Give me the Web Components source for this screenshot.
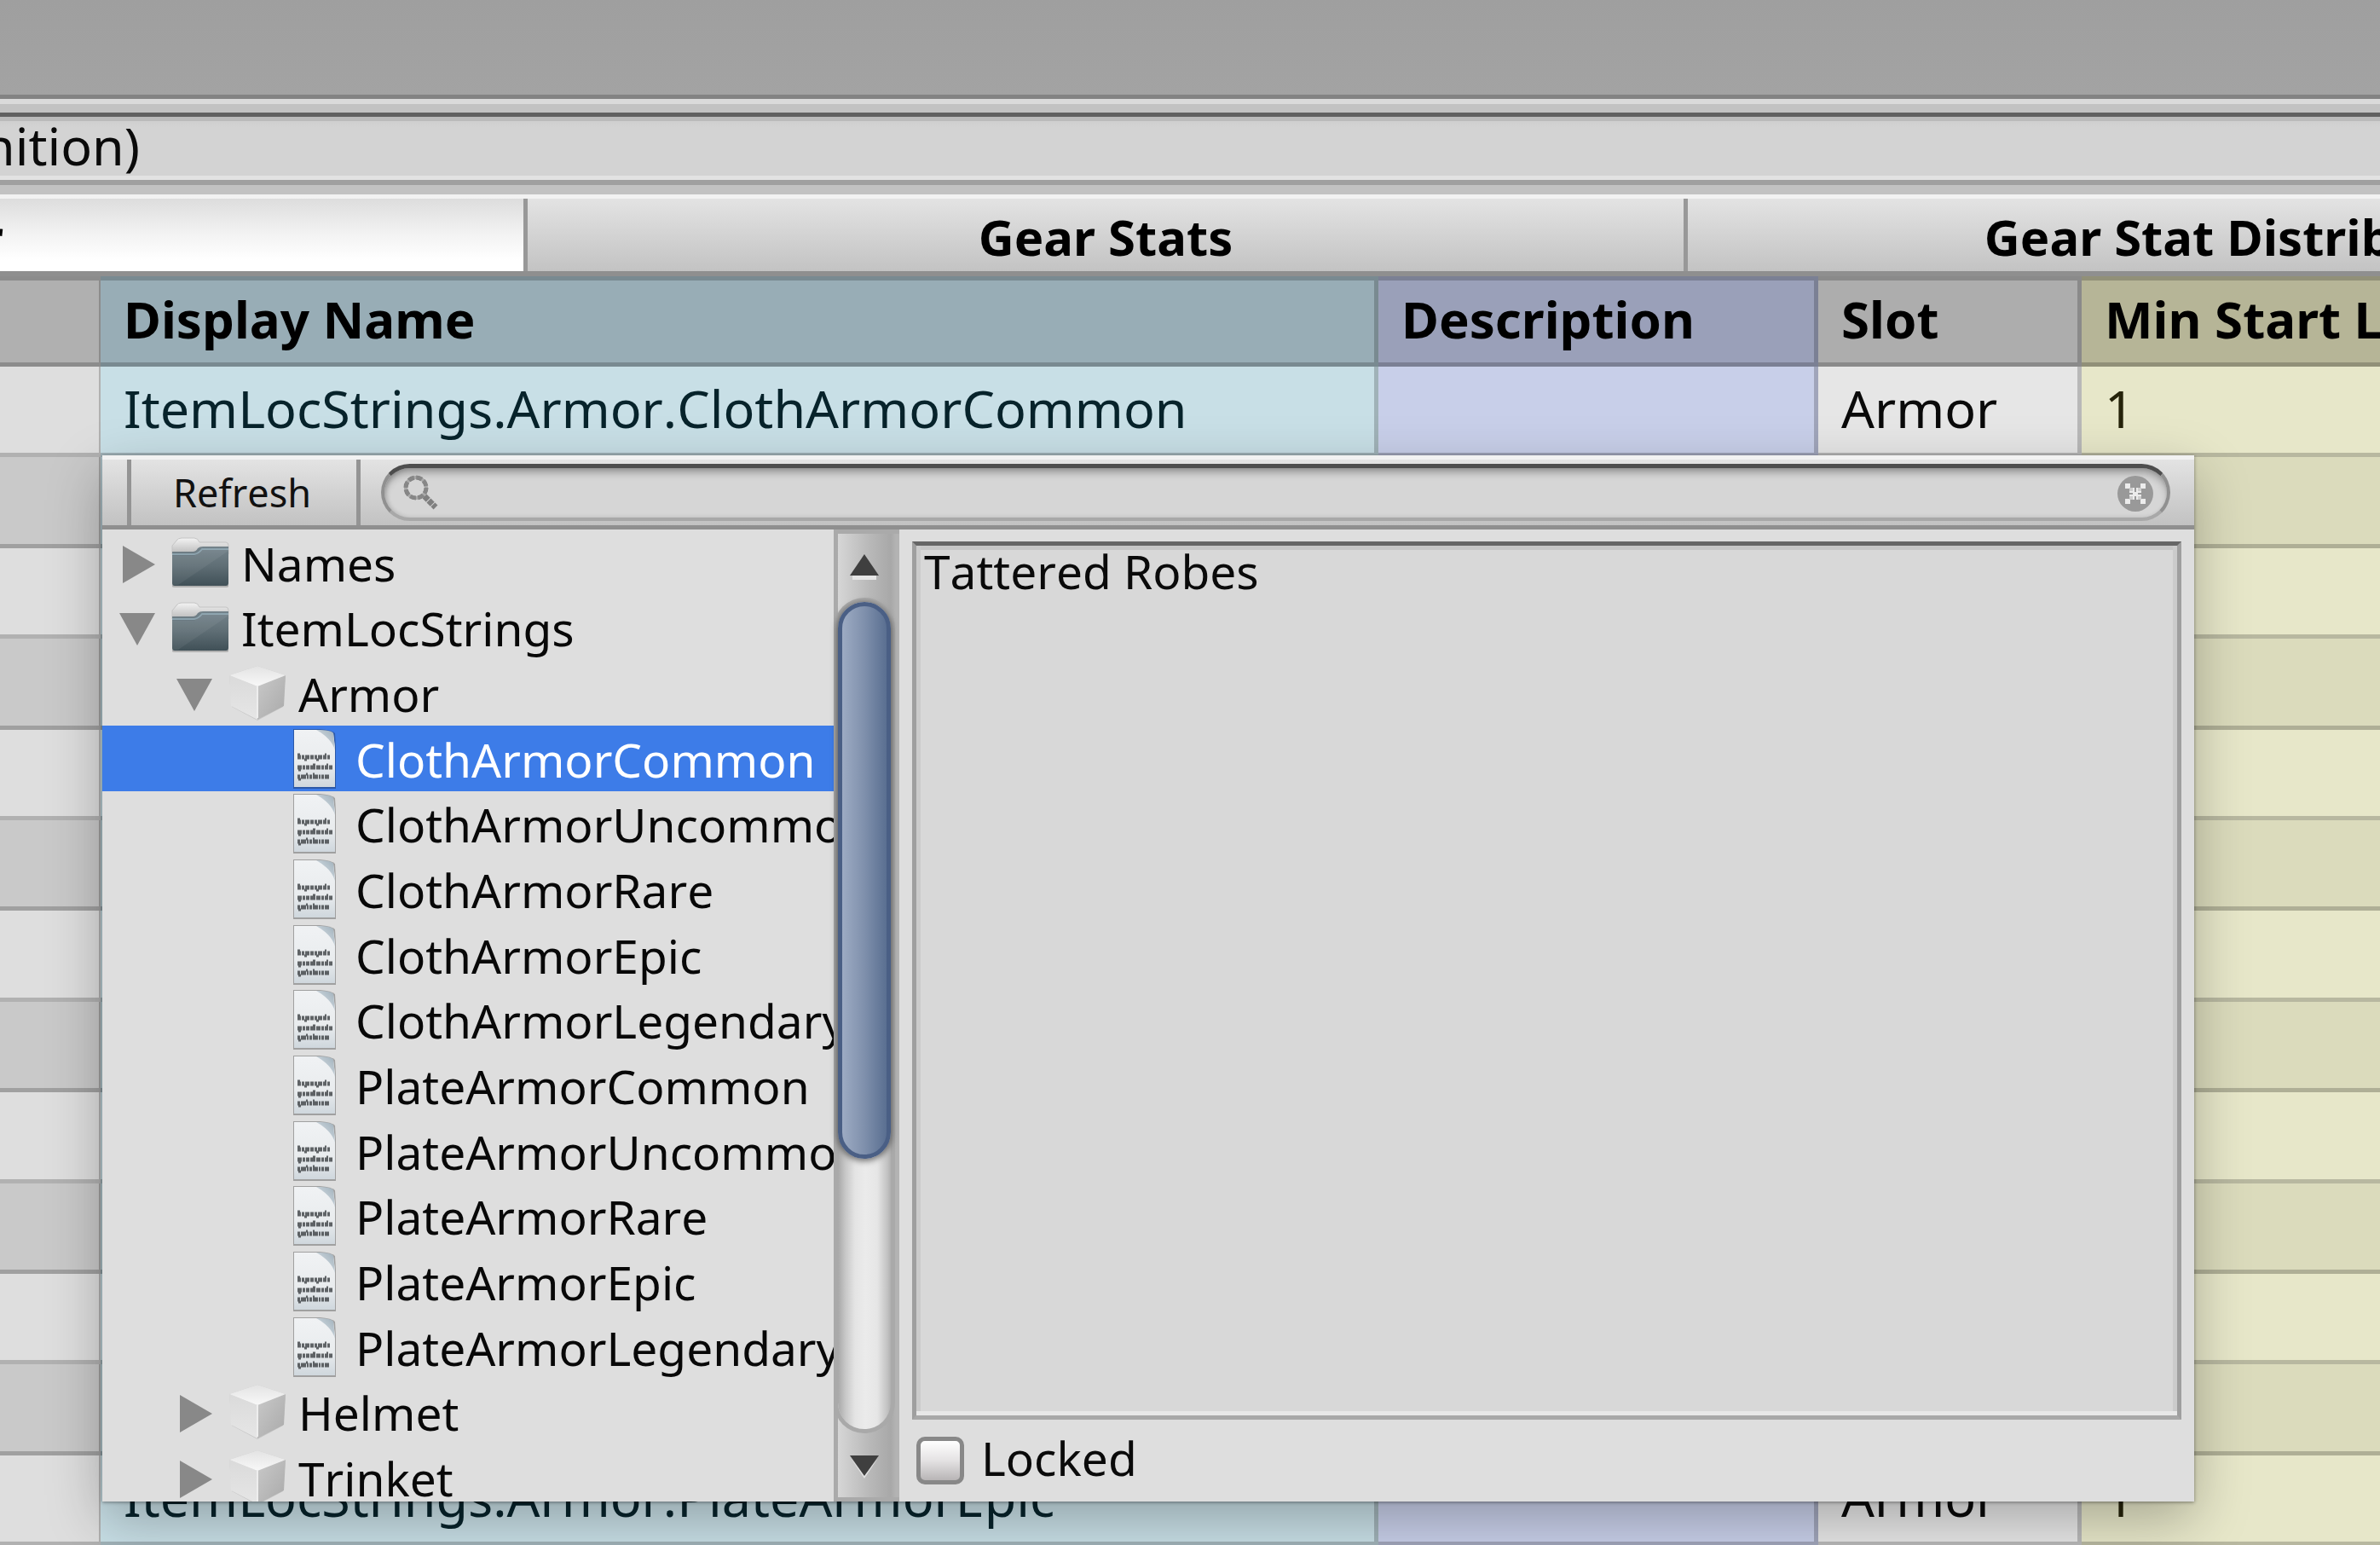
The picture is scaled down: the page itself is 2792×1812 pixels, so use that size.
<!DOCTYPE html>
<html lang="en">
<head>
<meta charset="utf-8">
<title>Gear Definition</title>
<style>
html, body { height: 100%; }
body { margin: 0; overflow: hidden; background: #c2c2c2; color: #0a0a0a; font: 61px "Noto Sans", "Open Sans", sans-serif; font-kerning: none; }
</style>
</head>
<body>
<gear-editor></gear-editor>
<script>
const define = (name, html, setup) => {
  const template = document.createElement('template');
  template.innerHTML = html;
  customElements.define(name, class extends HTMLElement {
    connectedCallback() {
      if (this.shadowRoot) return;
      this.attachShadow({ mode: 'open' }).append(template.content.cloneNode(true));
      if (setup) setup(this.shadowRoot, this);
    }
  });
};

/* One tab of the strip; the selected one is white. */
define('gear-tab', `
<style>
:host { display: flex; flex: 1 1 0; min-width: 0; border-right: 5px solid #989898; }
button { flex: 1; border: 0; padding: 4px 0 0; margin: 0;
  background: linear-gradient(#e3e3e3, #c3c3c3); font: bold 58px "Noto Sans", "Open Sans", sans-serif;
  line-height: 81px; font-kerning: none; white-space: nowrap; color: #000; }
:host([selected]) button { background: linear-gradient(#dddddd, #f3f3f3 50%, #ffffff 85%); }
</style>
<button role="tab"><slot></slot></button>`, (root, el) => {
  root.querySelector('button').setAttribute('aria-selected', el.hasAttribute('selected'));
});

define('gear-tabs', `
<style>
:host { display: flex; overflow: hidden; border-top: 5px solid #f2f2f2; border-bottom: 6px solid #8f8f8f; }
div { flex: 1; display: flex; margin: 0 -550px 0 -743px; }
</style>
<div role="tablist"><slot></slot></div>`);

/* Data grid behind the picker. */
define('gear-table', `
<style>
:host { display: block; overflow: hidden; }
table { width: 100%; table-layout: fixed; border-collapse: separate; border-spacing: 0; }
tr { height: 106px; }
tbody tr:nth-child(5n+2), tbody tr:nth-child(5n+4) { height: 107px; }
th, td { box-sizing: border-box; padding: 0 0 0 27px; vertical-align: top; text-align: left; white-space: nowrap; overflow: hidden;
  line-height: 98px; border-right: 5px solid rgba(0,0,0,.2); border-bottom: 5px solid rgba(0,0,0,.2); }
th { line-height: 91px; border-top: 5px solid rgba(0,0,0,.2); font-size: 60px; font-weight: bold; color: #000; }
th:first-child, td:first-child { border-right-width: 2px; }
th:last-child, td:last-child { border-right: 0; }
th:nth-child(1) { background-color: #b0b0b0; }
th:nth-child(2) { background-color: #98adb6; }
th:nth-child(3) { background-color: #9aa0b9; }
th:nth-child(4) { background-color: #adadad; }
th:nth-child(5) { background-color: #b6b597; }
td:nth-child(1) { background-color: #dedede; }
td:nth-child(2) { background-color: #c8dfe6; color: #07232b; }
td:nth-child(3) { background-color: #c8cfe9; }
td:nth-child(4) { background-color: #e6e6e6; }
td:nth-child(5) { background-color: #e7e7c9; color: #25230a; }
tr:nth-child(even) td:nth-child(1) { background-color: #c9c9c9; }
tr:nth-child(even) td:nth-child(2) { background-color: #b7cdd4; }
tr:nth-child(even) td:nth-child(3) { background-color: #b8bfd8; }
tr:nth-child(even) td:nth-child(4) { background-color: #d2d2d2; }
tr:nth-child(even) td:nth-child(5) { background-color: #dbdbbc; }
.key { width: 118px; } .name { width: 1499px; } .desc { width: 516px; } .slot { width: 309px; }
</style>
<table>
<colgroup><col class="key"><col class="name"><col class="desc"><col class="slot"><col></colgroup>
<thead><tr><th></th><th>Display Name</th><th>Description</th><th>Slot</th><th>Min Start Level</th></tr></thead>
<tbody></tbody>
</table>`, root => {
  const rows = Array.from({ length: 13 }, () => ['', '', '', '', '']);
  rows[0] = ['', 'ItemLocStrings.Armor.ClothArmorCommon', '', 'Armor', '1'];
  rows[12] = ['', 'ItemLocStrings.Armor.PlateArmorEpic', '', 'Armor', '1'];
  const body = root.querySelector('tbody');
  for (const cells of rows) {
    const tr = body.insertRow();
    for (const text of cells) tr.insertCell().textContent = text;
  }
});

/* Rounded search box with its magnifier and clear button. */
define('search-field', `
<style>
:host { flex: 1; display: flex; align-items: center; box-sizing: border-box; height: 67px; padding: 0 15px 0 22px; border-radius: 34px;
  border: 4px solid; border-color: #4d4d4d #909090 #a8a8a8; border-top-width: 5px; background: #d6d6d6; background-clip: padding-box;
  box-shadow: inset 0 8px 10px -3px rgba(0,0,0,.3), inset 2px 0 5px rgba(0,0,0,.15); }
input { flex: 1; min-width: 0; height: 48px; margin: 0 12px; padding: 0; border: 0; outline: 0; background: none; font: inherit; font-size: 45px; }
button { display: flex; padding: 2px 0 0; border: 0; background: none; }
svg { display: block; }
</style>
<svg width="42" height="42" viewBox="0 0 42 42" fill="none" stroke="#7f7f7f">
  <circle cx="15" cy="15" r="12" stroke-width="5" stroke-dasharray="7 2.4"/>
  <circle cx="15" cy="15" r="12" stroke-width="4" stroke="#8c8c8c" opacity=".6"/>
  <path d="M25 25L38 38" stroke-width="7" stroke-dasharray="6 1"/>
</svg>
<input type="text" aria-label="Search">
<button aria-label="Clear search">
  <svg width="44" height="44" viewBox="0 0 44 44">
    <circle cx="22" cy="22" r="21" fill="#999"/>
    <path fill="#ececec" d="M10 10h6v5h5v5h2v-5h5v-5h6v6h-5v5h-4v2h4v5h5v6h-6v-5h-5v-4h-2v4h-5v5h-6v-6h5v-5h4v-2h-4v-5h-5z"/>
    <path fill="#bbb" d="M15 15h4v4h-4zM25 15h4v4h-4zM15 25h4v4h-4zM25 25h4v4h-4z" opacity=".6"/>
  </svg>
</button>`);

define('picker-toolbar', `
<style>
:host { display: flex; align-items: stretch; height: 77px; padding-left: 29px; border-top: 5px solid #f2f2f2; border-bottom: 5px solid #8f8f8f;
  background: linear-gradient(#e3e3e3, #c2c2c2); }
button { width: 274px; margin: 0 24px 0 0; padding: 0 4px 0 0; border: 0; border-left: 5px solid #949494; border-right: 5px solid #949494; background: none;
  font: 45px "Noto Sans", "Open Sans", sans-serif; font-kerning: none; color: #111; }
.field { flex: 1; display: flex; align-items: flex-start; padding: 5px 28px 0 0; }
</style>
<button>Refresh</button>
<div class="field"><search-field></search-field></div>`);

const icons = {
  folder: `<svg width="68" height="60" viewBox="0 0 68 60">
    <defs><linearGradient id="f" x2="0" y2="1"><stop stop-color="#74838b"/><stop offset=".5" stop-color="#5f6e75"/><stop offset="1" stop-color="#405057"/></linearGradient>
    <linearGradient id="t" x2="0" y2="1"><stop stop-color="#f3f3f3"/><stop offset="1" stop-color="#b9b9b9"/></linearGradient></defs>
    <path d="M1 56h66v2q0 1-3 1H4q-3 0-3-1z" fill="#000" opacity=".2"/>
    <path d="M1 18V10Q2 9 6 4 8 1 12 1h15q4 0 6 5h31q3 0 3 4v10H1z" fill="url(#t)" stroke="#c4c4c4"/>
    <path d="M1 17h24q4 0 6-4 2-2 6-2h30v43q0 3-3 3H4q-3 0-3-3z" fill="url(#f)"/>
    <path d="M1 20h26q5-1 9-6h31" fill="none" stroke="#8ba2ad" stroke-width="2"/>
    <path d="M67 14V16L8 56H4q-3 0-3-3V22h26l9-8z" fill="#fff" opacity=".06"/></svg>`,
  cube: `<svg width="68" height="66" viewBox="0 0 68 66">
    <defs><linearGradient id="r" x2="1" y2="1"><stop stop-color="#c9c9c9"/><stop offset="1" stop-color="#a9a9a9"/></linearGradient>
    <linearGradient id="l" x2="0" y2="1"><stop stop-color="#dadada"/><stop offset="1" stop-color="#e6e6e6"/></linearGradient>
    <linearGradient id="u" x2="0" y2="1"><stop stop-color="#e3e3e3"/><stop offset="1" stop-color="#f8f8f8"/></linearGradient></defs>
    <path d="M34 1L67 12 64 49 34 65 4 49 1 12z" fill="#000" opacity=".1"/>
    <path d="M1 12L34 25V64L3 48z" fill="url(#l)"/><path d="M67 12L34 25V64L65 48z" fill="url(#r)"/>
    <path d="M34 1L67 12 34 25 1 12z" fill="url(#u)"/><path d="M34 25V62" stroke="#eee" stroke-width="2"/></svg>`,
  doc: `<svg width="52" height="72" viewBox="0 0 52 72">
    <defs><linearGradient id="p" x2="0" y2="1"><stop stop-color="#f0f2f4"/><stop offset=".6" stop-color="#e9ecee"/><stop offset="1" stop-color="#cfd7dd"/></linearGradient>
    <linearGradient id="c" x1="0" y1="1" x2="1" y2="0"><stop stop-color="#e6ebef"/><stop offset="1" stop-color="#9fb0bb"/></linearGradient></defs>
    <path d="M1 1H32Q46 2 50 6L51 22V71H1z" fill="#000" opacity=".28"/>
    <path d="M2 2H30Q40 3 48 6L50 22V69H2z" fill="url(#p)"/>
    <path d="M28 2Q46 2 48 6L50 26Q46 12 28 2z" fill="url(#c)"/>
    <g stroke="#3d4144" fill="none" opacity=".8"><path d="M6 34H44" stroke-width="5" stroke-dasharray="4 1 3 1 5 1"/><path d="M6 46H47" stroke-width="5" stroke-dasharray="5 1 3 1 4 1 6 1"/><path d="M6 57H43" stroke-width="5" stroke-dasharray="3 1 6 1 2 1"/>
    <path d="M6 31h3M14 37h3M28 37h3M38 31h2M7 49h3M24 43h3M40 43h2M7 60h3M16 54h2M24 54h2" stroke-width="3"/></g></svg>`,
  closed: `<svg width="42" height="44" viewBox="0 0 42 44"><path d="M4 0L42 22 4 44z" fill="#888"/></svg>`,
  open: `<svg width="42" height="40" viewBox="0 0 42 40"><path d="M0 1H42L21 39z" fill="#888"/></svg>`
};

/* A row of the tree: disclosure arrow, icon, label. */
define('tree-row', `
<style>
:host { display: flex; align-items: center; padding-left: 20px; overflow: hidden; white-space: nowrap; }
:host([level="1"]) { padding-left: 87px; }
:host([level="2"]) { padding-left: 154px; }
:host([selected]) { background: #3d7ce8; color: #fff; }
.arrow { flex: none; width: 61px; display: flex; padding-top: 4px; }
.icon { flex: none; width: 68px; margin-right: 14px; display: flex; justify-content: center; }
.label { padding-top: 2px; }
svg { display: block; }
</style>
<span class="arrow"></span><span class="icon"></span><span class="label"><slot></slot></span>`, (root, el) => {
  el.setAttribute('role', 'treeitem');
  root.querySelector('.arrow').innerHTML = icons[el.getAttribute('state')] || '';
  root.querySelector('.icon').innerHTML = icons[el.getAttribute('icon')];
});

define('string-tree', `
<style>
:host { flex: none; width: 858px; display: grid; grid-template-columns: minmax(0, 1fr); grid-auto-rows: 77px 76px 77px; overflow: hidden; font-size: 55px; line-height: 74px; color: #080808; }
</style>
<slot></slot>`, (root, el) => el.setAttribute('role', 'tree'));

define('scroll-bar', `
<style>
:host { flex: none; box-sizing: border-box; width: 77px; display: flex; flex-direction: column; border: solid #aaa; border-width: 5px 0 5px 5px;
  background: linear-gradient(90deg, #d6d6d6, #bababa 35px, #a8a8a8 62px, #b3b3b3 68px); }
button { flex: none; width: 62px; height: 80px; padding: 23px 0 0; border: 0; background: none; display: flex; align-items: flex-start; justify-content: center; }
svg { display: block; }
.track { flex: 1; width: 62px; border-radius: 31px; box-shadow: 0 0 0 5px #a9a9a9;
  background: linear-gradient(90deg, #a8a8a8, #c8c8c8 9px, #e4e4e4 20px, #ebebeb 32px, #e6e6e6 46px, #c2c2c2 58px, #b0b0b0); }
.thumb { box-sizing: border-box; height: 653px; border-radius: 31px; border: 5px solid #4a5f85; 
  background: linear-gradient(90deg, #9dabc3, #7f90ac 50%, #5a6f91); box-shadow: 0 2px 7px 1px rgba(0,0,0,.5); }
.track + button { padding-top: 30px; }
</style>
<button aria-label="Scroll up"><svg width="36" height="32" viewBox="0 0 36 32"><path d="M4 26H32V31H4z" fill="#e6e6e6"/><path d="M18 1L35 26H1z" fill="#3f3f3f"/></svg></button>
<div class="track"><div class="thumb"></div></div>
<button aria-label="Scroll down"><svg width="36" height="28" viewBox="0 0 36 28"><path d="M18 28L34 4 18 24 2 4z" fill="#e2e2e2"/><path d="M1 1H35L18 25z" fill="#3f3f3f"/></svg></button>`);

define('string-details', `
<style>
:host { flex: 1; min-width: 0; display: flex; flex-direction: column; padding: 14px 15px 20px; }
textarea { flex: 1; box-sizing: border-box; margin: 0 0 20px; padding: 0 9px; resize: none; outline: 0; border-radius: 0;
  border: 5px solid; border-color: #666 #9f9f9f #a8a8a8; background: #d8d8d8; color: #0a0a0a;
  box-shadow: inset 0 -5px #e8e8e8, inset 5px 0 #cbcbcb, inset -5px 0 #cbcbcb, inset 0 5px #c6c6c6;
  font: 55px "Noto Sans", "Open Sans", sans-serif; font-kerning: none; line-height: 60px; }
label { display: flex; gap: 20px; height: 56px; padding-left: 5px; font-size: 55px; line-height: 50px; }
input { appearance: none; box-sizing: border-box; width: 56px; height: 56px; margin: 0; border: 5px solid #888; border-radius: 10px; background: linear-gradient(#fff, #e4e2e3 50%, #b8b5b6); }
</style>
<textarea aria-label="String value" spellcheck="false">Tattered Robes</textarea>
<label><input type="checkbox">Locked</label>`);

define('string-picker', `
<style>
:host { display: flex; flex-direction: column; background: #dedede; box-shadow: 0 22px 60px rgba(0,0,0,.27), 0 1px 4px rgba(0,0,0,.4); }
.panes { flex: 1; min-height: 0; display: flex; }
</style>
<picker-toolbar></picker-toolbar>
<div class="panes">
  <string-tree>
    <tree-row state="closed" icon="folder">Names</tree-row>
    <tree-row state="open" icon="folder">ItemLocStrings</tree-row>
    <tree-row level="1" state="open" icon="cube">Armor</tree-row>
    <tree-row level="2" icon="doc" selected>ClothArmorCommon</tree-row>
    <tree-row level="2" icon="doc">ClothArmorUncommon</tree-row>
    <tree-row level="2" icon="doc">ClothArmorRare</tree-row>
    <tree-row level="2" icon="doc">ClothArmorEpic</tree-row>
    <tree-row level="2" icon="doc">ClothArmorLegendary</tree-row>
    <tree-row level="2" icon="doc">PlateArmorCommon</tree-row>
    <tree-row level="2" icon="doc">PlateArmorUncommon</tree-row>
    <tree-row level="2" icon="doc">PlateArmorRare</tree-row>
    <tree-row level="2" icon="doc">PlateArmorEpic</tree-row>
    <tree-row level="2" icon="doc">PlateArmorLegendary</tree-row>
    <tree-row level="1" state="closed" icon="cube">Helmet</tree-row>
    <tree-row level="1" state="closed" icon="cube">Trinket</tree-row>
  </string-tree>
  <scroll-bar></scroll-bar>
  <string-details></string-details>
</div>`);

define('gear-editor', `
<style>
:host { position: relative; display: flex; flex-direction: column; height: 100vh; overflow: hidden; }
.backdrop { height: 111px; background: linear-gradient(#9f9f9f, #a3a3a3); border-bottom: 5px solid #838383; }
.gap { height: 10px; background: #c2c2c2; border-top: 6px solid #dadada; }
.title { border-top: 5px solid #606060; border-bottom: 6px solid #a0a0a0; height: 74px; line-height: 68px; overflow: hidden; text-indent: -20px; white-space: nowrap;
  background: linear-gradient(#bababa 5px, #cfcfcf 5px, #d3d3d3 12px, #d3d3d3 69px, #e2e2e2 69px); margin-bottom: 11px; }
gear-table { flex: 1; min-height: 0; }
string-picker { position: absolute; left: 120px; right: 218px; top: 534px; bottom: 51px; }
</style>
<div class="backdrop"></div>
<div class="gap"></div>
<div class="title">nition)</div>
<gear-tabs>
  <gear-tab selected>Gear</gear-tab>
  <gear-tab>Gear Stats</gear-tab>
  <gear-tab>Gear Stat Distributions</gear-tab>
</gear-tabs>
<gear-table></gear-table>
<string-picker></string-picker>`);
</script>
</body>
</html>
